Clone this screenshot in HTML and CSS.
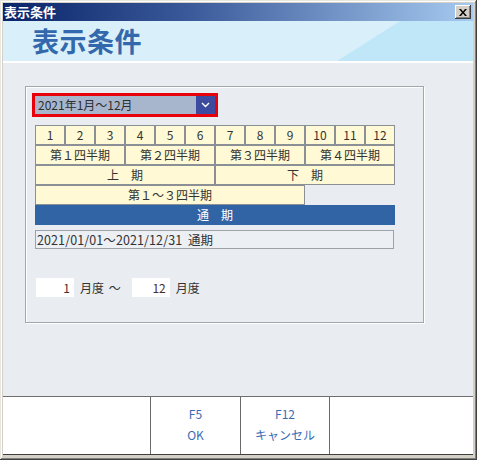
FILE: index.html
```html
<!DOCTYPE html>
<html lang="ja">
<head>
<meta charset="utf-8">
<link rel="stylesheet" href="styles.css">
</head>
<body>
<div class="window">
  <div class="titlebar">
    <span class="title-text">表示条件</span>
    <span class="close-btn">
      <svg width="8" height="7" viewBox="0 0 8 7"><path d="M0 0h2l2 2.5L6 0h2L5 3.5 8 7H6L4 4.5 2 7H0l3-3.5z" fill="#000"/></svg>
    </span>
  </div>
  <div class="header"><h1 class="header-title">表示条件</h1></div>
  <div class="content">
    <div class="panel">
      <div class="dropdown">
        <div class="select">
          <span class="select-text">2021年1月～12月</span>
          <span class="select-btn">
            <svg width="9" height="6" viewBox="0 0 9 6"><path d="M1 1l3.5 3.5L8 1" fill="none" stroke="#fff" stroke-width="1.4"/></svg>
          </span>
        </div>
      </div>
      <div class="grid">
        <div class="row">
          <div class="cell m">1</div><div class="cell m">2</div><div class="cell m">3</div>
          <div class="cell m">4</div><div class="cell m">5</div><div class="cell m">6</div>
          <div class="cell m">7</div><div class="cell m">8</div><div class="cell m">9</div>
          <div class="cell m">10</div><div class="cell m">11</div><div class="cell m">12</div>
        </div>
        <div class="row">
          <div class="cell q">第１四半期</div><div class="cell q">第２四半期</div>
          <div class="cell q">第３四半期</div><div class="cell q">第４四半期</div>
        </div>
        <div class="row">
          <div class="cell h">上　期</div><div class="cell h">下　期</div>
        </div>
        <div class="row">
          <div class="cell q3">第１～３四半期</div>
        </div>
        <div class="row">
          <div class="cell full">通　期</div>
        </div>
      </div>
      <div class="range">2021/01/01～2021/12/31&nbsp;&nbsp;通期</div>
      <div class="months">
        <span class="num-input">1</span>
        <span class="label">月度 ～</span>
        <span class="num-input">12</span>
        <span class="label">月度</span>
      </div>
    </div>
  </div>
  <div class="footer">
    <div class="spacer"></div>
    <div class="fbtn first"><span>F5</span><span>OK</span></div>
    <div class="fbtn"><span>F12</span><span>キャンセル</span></div>
  </div>
</div>
</body>
</html>
```

FILE: styles.css
```css
* { box-sizing: border-box; margin: 0; padding: 0; }
html, body { width: 477px; height: 460px; overflow: hidden; }
body {
  font-family: "Noto Sans CJK JP", "Noto Sans", sans-serif;
  font-size: 12px;
  color: #333;
  background: #d4d0c8;
}
.window {
  width: 477px;
  height: 460px;
  padding: 3px 4px 5px 3px;
  background: #d4d0c8;
  box-shadow: inset -1px -1px 0 #404040, inset 1px 1px 0 #e8e6e0, inset -2px -2px 0 #808080, inset 2px 2px 0 #ffffff;
  display: flex;
  flex-direction: column;
}
.titlebar {
  height: 18px;
  background: linear-gradient(to right, #0a246a, #3a5a9a 40%, #a6caf0);
  display: flex;
  align-items: center;
  justify-content: space-between;
  padding: 0 2px 0 1px;
}
.title-text {
  color: #fff;
  font-weight: bold;
  font-size: 13px;
  line-height: 18px;
}
.close-btn {
  width: 16px;
  height: 14px;
  background: #d4d0c8;
  box-shadow: inset -1px -1px 0 #404040, inset 1px 1px 0 #fff, inset -2px -2px 0 #808080;
  display: flex;
  align-items: center;
  justify-content: center;
}
.header {
  height: 42px;
  position: relative;
  background: #d9f0fa;
  border-bottom: 2px solid #ffffff;
  overflow: hidden;
}
.header::before {
  content: "";
  position: absolute;
  inset: 0;
  background: #c0e7f7;
  clip-path: polygon(397px 0, 100% 0, 100% 100%, 334px 100%);
}
.header-title {
  position: relative;
  font-size: 27px;
  font-weight: bold;
  color: #3468ad;
  line-height: 40px;
  padding-left: 29px;
  letter-spacing: 0.5px;
}
.content {
  flex: 1;
  background: #e9edf2;
  padding: 23px 0 0 22px;
}
.panel {
  width: 399px;
  height: 237px;
  border: 1px solid #a3a7ad;
  box-shadow: 1px 1px 0 #ffffff, inset 1px 1px 0 #ffffff;
  padding: 6px 0 0 6px;
}
.dropdown {
  width: 186px;
  height: 24px;
  border: 3px solid #e8000b;
}
.select {
  height: 18px;
  background: #a7b6cd;
  display: flex;
  align-items: center;
  justify-content: space-between;
}
.select-text {
  padding-left: 3px;
  color: #2e2e2e;
  font-size: 12px;
  line-height: 18px;
}
.select-btn {
  width: 19px;
  height: 18px;
  background: #3c4aa0;
  display: flex;
  align-items: center;
  justify-content: center;
}
.grid {
  margin: 8px 0 0 3px;
  width: 360px;
}
.row {
  display: flex;
  height: 20px;
}
.cell {
  background: #fffad5;
  border: 1px solid #8b9097;
  display: flex;
  align-items: center;
  justify-content: center;
  font-size: 12px;
  line-height: 18px;
  color: #333;
}
.m { width: 30px; }
.q { width: 90px; }
.h { width: 180px; }
.q3 { width: 270px; }
.full {
  width: 360px;
  background: #3064a5;
  border-color: #3064a5;
  color: #fff;
}
.range {
  margin: 5px 0 0 3px;
  width: 359px;
  height: 19px;
  border: 1px solid #9ea2a8;
  background: #eceff3;
  line-height: 17px;
  padding-left: 1px;
  font-size: 12.5px;
  letter-spacing: 0.1px;
  color: #333;
}
.months {
  margin: 29px 0 0 4px;
  display: flex;
  align-items: center;
  height: 19px;
}
.num-input {
  width: 38px;
  height: 19px;
  background: #fff;
  text-align: right;
  padding-right: 4px;
  line-height: 19px;
  color: #4a2e32;
}
.label {
  margin: 0 11px 0 6px;
  color: #333;
  word-spacing: 2px;
}
.footer {
  height: 59px;
  background: #fff;
  border-top: 1px solid #6e6e6e;
  border-bottom: 1px solid #3e3e3e;
  display: flex;
}
.spacer { width: 147px; }
.fbtn {
  width: 90px;
  border-left: 1px solid #6a6a6a;
  border-right: 1px solid #6a6a6a;
  display: flex;
  flex-direction: column;
  align-items: center;
  padding-top: 6px;
  color: #3a6bb5;
  font-size: 12px;
  line-height: 21px;
}
.fbtn.first { border-right: none; }
```
